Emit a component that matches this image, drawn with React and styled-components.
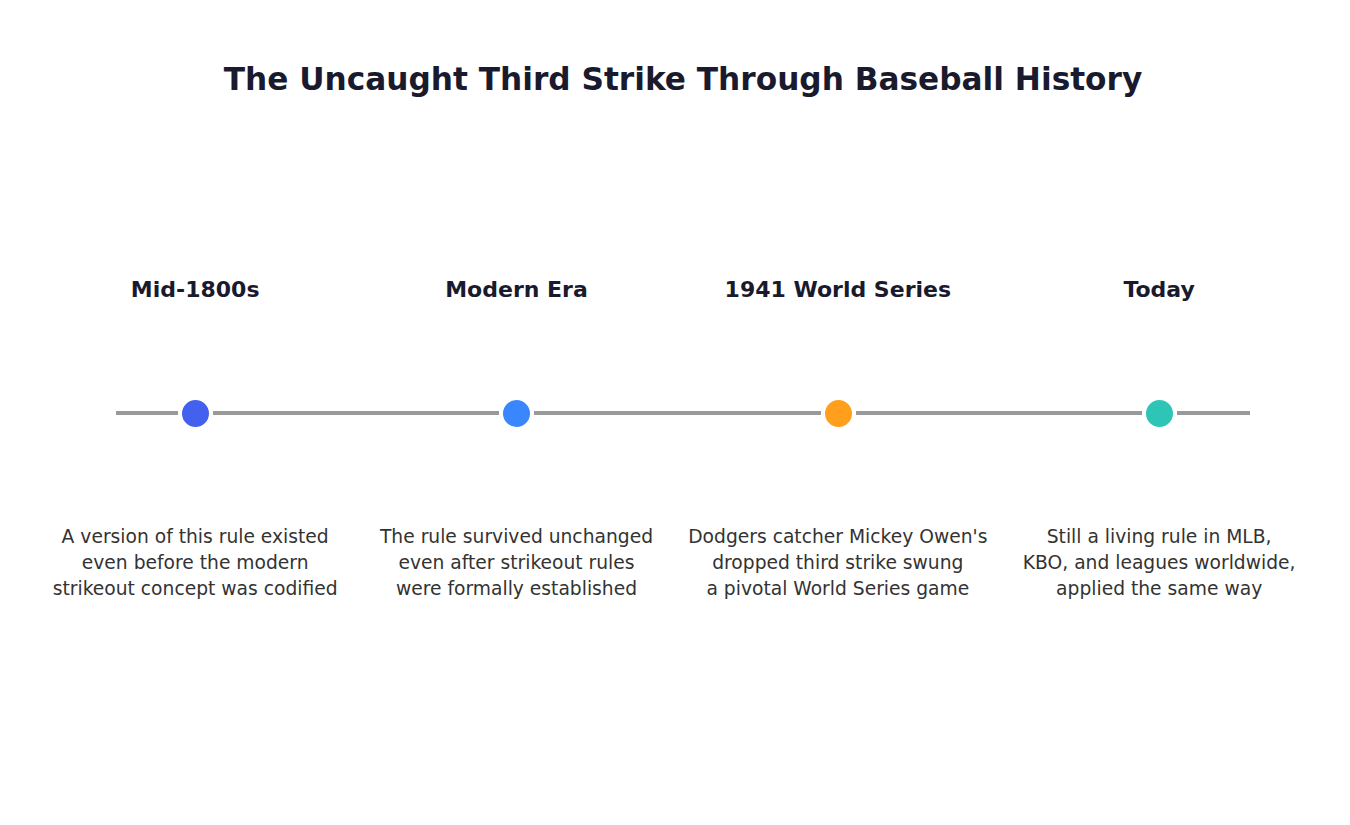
import styled, { createGlobalStyle } from 'styled-components'

const GlobalStyle = createGlobalStyle`
  html, body {
    margin: 0;
    padding: 0;
    background: #ffffff;
    font-family: "DejaVu Sans", "Liberation Sans", sans-serif;
  }
`

const events = [
  {
    label: 'Mid-1800s',
    color: '#4361ee',
    text: ['A version of this rule existed', 'even before the modern', 'strikeout concept was codified'],
  },
  {
    label: 'Modern Era',
    color: '#3a86ff',
    text: ['The rule survived unchanged', 'even after strikeout rules', 'were formally established'],
  },
  {
    label: '1941 World Series',
    color: '#ff9f1c',
    text: ["Dodgers catcher Mickey Owen's", 'dropped third strike swung', 'a pivotal World Series game'],
  },
  {
    label: 'Today',
    color: '#2ec4b6',
    text: ['Still a living rule in MLB,', 'KBO, and leagues worldwide,', 'applied the same way'],
  },
]

// widths of the line pieces after each dot
const tails = [286, 287, 286, 73.5]

const Page = styled.div`
  width: 1350px;
  height: 825px;
  display: flex;
  flex-direction: column;
`

const Title = styled.h1`
  margin: 61px 0 0 16px;
  font-size: 31.2px;
  line-height: 36px;
  font-weight: 700;
  color: #1a1a2e;
  text-align: center;
`

const Columns = styled.div`
  display: grid;
  grid-template-columns: repeat(4, 321.33px);
  padding-left: 34.5px;
  margin-top: ${p => p.$top}px;
`

const Label = styled.div`
  text-align: center;
  font-size: 22px;
  line-height: 24px;
  font-weight: 700;
  color: #1a1a2e;
`

const Track = styled.div`
  display: flex;
  align-items: center;
  width: 1134px;
  margin: 93.5px 0 0 116px;
  height: 35px;
`

const Segment = styled.div`
  height: 4px;
  background: #999999;
  flex: 0 0 ${p => p.$width}px;
`

const Dot = styled.div`
  flex: 0 0 27px;
  height: 27px;
  border-radius: 50%;
  border: 4px solid #ffffff;
  background: ${p => p.$color};
`

const Desc = styled.div`
  text-align: center;
  font-size: 18.7px;
  line-height: 26px;
  color: #333333;
`

export default function App() {
  return (
    <Page>
      <GlobalStyle />
      <Title>The Uncaught Third Strike Through Baseball History</Title>
      <Columns $top={181}>
        {events.map(e => (
          <Label key={e.label}>{e.label}</Label>
        ))}
      </Columns>
      <Track>
        <Segment $width={61.5} />
        {events.map((e, i) => [
          <Dot key={e.label} $color={e.color} />,
          <Segment key={`${e.label}-seg`} $width={tails[i]} />,
        ])}
      </Track>
      <Columns $top={93.5}>
        {events.map(e => (
          <Desc key={e.label}>
            {e.text.map(line => (
              <div key={line}>{line}</div>
            ))}
          </Desc>
        ))}
      </Columns>
    </Page>
  )
}
